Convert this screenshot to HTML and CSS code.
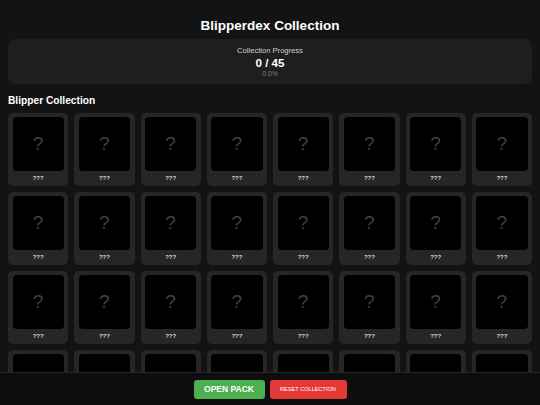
FILE: index.html
```html
<!DOCTYPE html>
<html>
<head>
<meta charset="utf-8">
<link rel="stylesheet" href="styles.css">
</head>
<body>
<div class="page">
  <h1 class="title">Blipperdex Collection</h1>
  <div class="progress">
    <div class="progress-label">Collection Progress</div>
    <div class="progress-count">0 / 45</div>
    <div class="progress-pct">0.0%</div>
  </div>
  <h2 class="section-title">Blipper Collection</h2>
  <div class="grid" id="grid"></div>
</div>
<div class="bottom-bar">
  <button class="btn btn-open">OPEN PACK</button>
  <button class="btn btn-reset">RESET COLLECTION</button>
</div>
<script>
  var g = document.getElementById('grid');
  for (var i = 0; i < 45; i++) {
    var c = document.createElement('div');
    c.className = 'card';
    c.innerHTML = '<div class="card-img">?</div><div class="card-name">???</div>';
    g.appendChild(c);
  }
</script>
</body>
</html>
```
FILE: styles.css
```css
* { box-sizing: border-box; }
html, body {
  margin: 0;
  padding: 0;
  background: #131313;
  color: #fff;
  font-family: "Liberation Sans", Arial, sans-serif;
}
.page {
  padding: 17px 8px 60px;
}
.title {
  margin: 0 0 4px;
  font-size: 13.5px;
  line-height: 18px;
  font-weight: bold;
  text-align: center;
}
.progress {
  background: #1e1e1e;
  border-radius: 7px;
  height: 45px;
  padding-top: 7px;
  text-align: center;
}
.progress-label {
  font-size: 7.6px;
  line-height: 10px;
  color: #d0d0d0;
}
.progress-count {
  font-size: 11.6px;
  line-height: 14px;
  font-weight: bold;
}
.progress-pct {
  font-size: 6.9px;
  line-height: 8px;
  color: #808080;
}
.section-title {
  margin: 10px 0 6px;
  font-size: 10.2px;
  line-height: 13px;
  font-weight: bold;
}
.grid {
  display: grid;
  grid-template-columns: repeat(8, 1fr);
  gap: 6px;
}
.card {
  background: #262626;
  border-radius: 5px;
  padding: 4px 4.5px 3px;
}
.card-img {
  height: 54px;
  background: #000;
  border-radius: 4px;
  display: flex;
  align-items: center;
  justify-content: center;
  font-size: 19px;
  color: #404040;
}
.card-name {
  margin-top: 3px;
  font-size: 6px;
  line-height: 9px;
  font-weight: bold;
  text-align: center;
  color: #d8d8d8;
}
.bottom-bar {
  position: fixed;
  left: 0;
  right: 0;
  bottom: 0;
  height: 33px;
  background: #0e0e0e;
  border-top: 1px solid #242424;
  display: flex;
  justify-content: center;
  align-items: center;
  gap: 5px;
}
.btn {
  border: none;
  border-radius: 3px;
  color: #fff;
  font-family: "Liberation Sans", Arial, sans-serif;
  height: 19px;
  padding: 0;
  margin: 0;
}
.btn-open {
  width: 71px;
  background: #4caf50;
  font-size: 8.5px;
  font-weight: bold;
}
.btn-reset {
  width: 77px;
  background: #e53935;
  font-size: 5.6px;
}
```
